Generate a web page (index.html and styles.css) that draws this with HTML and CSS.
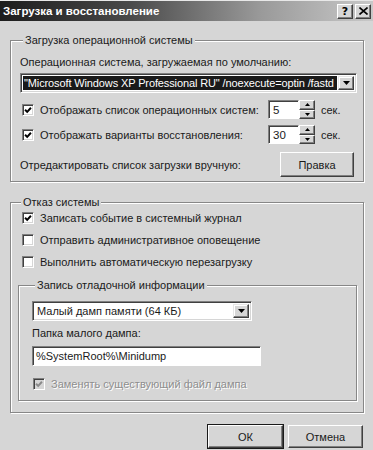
FILE: index.html
```html
<!DOCTYPE html>
<html lang="ru">
<head>
<meta charset="utf-8">
<title>Загрузка и восстановление</title>
<link rel="stylesheet" href="styles.css">
</head>
<body>
<div class="window">
  <div class="titlebar">
    <span class="title">Загрузка и восстановление</span>
    <div class="tb-buttons">
      <span class="tb-btn tb-help">?</span>
      <span class="tb-btn"><svg width="9" height="8" viewBox="0 0 9 8"><path d="M0.5 0.5 L8.5 7.5 M8.5 0.5 L0.5 7.5" stroke="#000" stroke-width="1.6" fill="none"/></svg></span>
    </div>
  </div>
  <div class="client">
    <fieldset class="group g-boot">
      <legend>Загрузка операционной системы</legend>
      <div class="label">Операционная система, загружаемая по умолчанию:</div>
      <div class="combo combo-os">
        <div class="combo-field"><span class="combo-sel">"Microsoft Windows XP Professional RU" /noexecute=optin /fastd</span></div>
        <span class="combo-btn"><svg width="7" height="4" viewBox="0 0 7 4"><path d="M0 0 H7 L3.5 4 Z" fill="#000"/></svg></span>
      </div>
      <div class="row row-spin">
        <span class="cb"><svg width="8" height="8" viewBox="0 0 9 9"><path d="M1.2 4.2 L3.6 6.6 L7.8 2" stroke="#000" stroke-width="2.2" fill="none"/></svg></span>
        <span class="row-label">Отображать список операционных систем:</span>
        <div class="spin">
          <span class="spin-field">5</span>
          <span class="spin-btns">
            <span class="spin-b"><svg width="5" height="3" viewBox="0 0 5 3"><path d="M0 3 H5 L2.5 0 Z" fill="#000"/></svg></span>
            <span class="spin-b"><svg width="5" height="3" viewBox="0 0 5 3"><path d="M0 0 H5 L2.5 3 Z" fill="#000"/></svg></span>
          </span>
        </div>
        <span class="unit">сек.</span>
      </div>
      <div class="row row-spin">
        <span class="cb"><svg width="8" height="8" viewBox="0 0 9 9"><path d="M1.2 4.2 L3.6 6.6 L7.8 2" stroke="#000" stroke-width="2.2" fill="none"/></svg></span>
        <span class="row-label">Отображать варианты восстановления:</span>
        <div class="spin">
          <span class="spin-field">30</span>
          <span class="spin-btns">
            <span class="spin-b"><svg width="5" height="3" viewBox="0 0 5 3"><path d="M0 3 H5 L2.5 0 Z" fill="#000"/></svg></span>
            <span class="spin-b"><svg width="5" height="3" viewBox="0 0 5 3"><path d="M0 0 H5 L2.5 3 Z" fill="#000"/></svg></span>
          </span>
        </div>
        <span class="unit">сек.</span>
      </div>
      <div class="row row-edit">
        <span class="row-label">Отредактировать список загрузки вручную:</span>
        <span class="btn btn-edit">Правка</span>
      </div>
    </fieldset>

    <fieldset class="group g-fail">
      <legend>Отказ системы</legend>
      <div class="row row-check first">
        <span class="cb"><svg width="8" height="8" viewBox="0 0 9 9"><path d="M1.2 4.2 L3.6 6.6 L7.8 2" stroke="#000" stroke-width="2.2" fill="none"/></svg></span>
        <span class="row-label">Записать событие в системный журнал</span>
      </div>
      <div class="row row-check">
        <span class="cb"></span>
        <span class="row-label">Отправить административное оповещение</span>
      </div>
      <div class="row row-check">
        <span class="cb"></span>
        <span class="row-label">Выполнить автоматическую перезагрузку</span>
      </div>

      <fieldset class="group g-debug">
        <legend>Запись отладочной информации</legend>
        <div class="combo combo-dump">
          <div class="combo-field plain"><span>Малый дамп памяти (64 КБ)</span></div>
          <span class="combo-btn"><svg width="7" height="4" viewBox="0 0 7 4"><path d="M0 0 H7 L3.5 4 Z" fill="#000"/></svg></span>
        </div>
        <div class="label label-dir">Папка малого дампа:</div>
        <div class="textbox">%SystemRoot%\Minidump</div>
        <div class="row row-check disabled">
          <span class="cb cb-disabled"><svg width="8" height="8" viewBox="0 0 9 9"><path d="M1.2 4.2 L3.6 6.6 L7.8 2" stroke="#8a8a8a" stroke-width="2.2" fill="none"/></svg></span>
          <span class="row-label">Заменять существующий файл дампа</span>
        </div>
      </fieldset>
    </fieldset>

    <div class="actions">
      <span class="btn btn-default">ОК</span>
      <span class="btn btn-cancel">Отмена</span>
    </div>
  </div>
</div>
</body>
</html>
```

FILE: styles.css
```css
html, body {
  margin: 0;
  padding: 0;
}

body {
  width: 373px;
  height: 450px;
  overflow: hidden;
  background: #d6d6d6;
  font-family: "Liberation Sans", Arial, sans-serif;
  font-size: 11px;
  color: #1a1a1a;
}

.window {
  width: 373px;
  height: 450px;
  display: flex;
  flex-direction: column;
}

.titlebar {
  height: 21px;
  display: flex;
  align-items: center;
  justify-content: space-between;
  padding: 0 2px 0 3px;
  background: linear-gradient(to right, #1c1c1c 0%, #4a4a4a 35%, #9a9a9a 70%, #c8c8c8 100%);
  border-top: 1px solid #e8e8e8;
  box-sizing: border-box;
}

.title {
  color: #fff;
  font-weight: bold;
  font-size: 11.5px;
}

.tb-buttons {
  display: flex;
  gap: 2px;
}

.tb-btn {
  width: 14px;
  height: 13px;
  background: #d6d6d6;
  border: 1px solid;
  border-color: #fff #404040 #404040 #fff;
  box-shadow: inset -1px -1px 0 #808080;
  display: flex;
  align-items: center;
  justify-content: center;
  font-weight: bold;
  font-size: 11px;
  line-height: 1;
  color: #000;
  font-family: "DejaVu Sans", sans-serif;
}

.client {
  flex: 1;
  display: flex;
  flex-direction: column;
  padding: 12px 9px 0 10px;
}

.group {
  margin: 0;
  border: 1px solid #878787;
  box-shadow: inset 1px 1px 0 #fff, 1px 1px 0 #fff;
  min-width: 0;
}

.group legend {
  padding: 0 2px;
  margin-left: 3px;
  background: #d6d6d6;
  line-height: 14px;
}

.g-boot {
  padding: 8px 6px 4px 9px;
}

.label {
  line-height: 14px;
}

.combo {
  display: flex;
  background: #fff;
  border: 1px solid;
  border-color: #808080 #fff #fff #808080;
  box-shadow: inset 1px 1px 0 #404040, inset -1px -1px 0 #d6d6d6;
  padding: 2px;
  height: 20px;
  box-sizing: border-box;
}

.combo-os {
  margin-top: 4px;
}

.combo-field {
  flex: 1;
  min-width: 0;
  overflow: hidden;
  white-space: nowrap;
  display: flex;
  align-items: center;
}

.combo-sel {
  display: block;
  background: #1a1a1a;
  color: #fff;
  width: 100%;
  line-height: 14px;
  padding-left: 1px;
  overflow: hidden;
  margin-right: 1px;
  letter-spacing: -0.12px;
}

.combo-field.plain span {
  padding-left: 2px;
}

.combo-btn {
  width: 16px;
  flex: none;
  background: #d6d6d6;
  border: 1px solid;
  border-color: #e6e6e6 #404040 #404040 #e6e6e6;
  box-shadow: inset -1px -1px 0 #808080, inset 1px 1px 0 #fff;
  box-sizing: border-box;
  display: flex;
  align-items: center;
  justify-content: center;
}

.row {
  display: flex;
  align-items: center;
}

.row-spin {
  height: 19px;
  margin-top: 7px;
  padding-left: 2px;
}

.row-spin + .row-spin {
  margin-top: 6px;
}

.cb {
  width: 12px;
  height: 12px;
  flex: none;
  box-sizing: border-box;
  background: #fff;
  border: 1px solid;
  border-color: #808080 #fff #fff #808080;
  box-shadow: inset 1px 1px 0 #404040, inset -1px -1px 0 #d6d6d6;
  display: flex;
  align-items: center;
  justify-content: center;
  margin-right: 6px;
}

.cb-disabled {
  background: #d6d6d6;
}

.row-label {
  white-space: nowrap;
}

.spin {
  margin-left: auto;
  display: flex;
  height: 19px;
}

.spin-field {
  width: 31px;
  box-sizing: border-box;
  background: #fff;
  border: 1px solid;
  border-color: #808080 #fff #fff #808080;
  box-shadow: inset 1px 1px 0 #404040;
  padding: 1px 0 0 4px;
  line-height: 16px;
  font-size: 11.5px;
}

.spin-btns {
  display: flex;
  flex-direction: column;
  width: 16px;
}

.spin-b {
  flex: 1;
  box-sizing: border-box;
  background: #d6d6d6;
  border: 1px solid;
  border-color: #fff #404040 #404040 #fff;
  box-shadow: inset -1px -1px 0 #808080;
  display: flex;
  align-items: center;
  justify-content: center;
}

.unit {
  width: 42px;
  padding-left: 6px;
  box-sizing: border-box;
}

.row-edit {
  margin-top: 8px;
  justify-content: space-between;
}

.btn {
  display: flex;
  align-items: center;
  justify-content: center;
  box-sizing: border-box;
  background: #d6d6d6;
  border: 1px solid;
  border-color: #fff #404040 #404040 #fff;
  box-shadow: inset -1px -1px 0 #808080;
}

.btn-edit {
  width: 74px;
  height: 25px;
  margin-right: 3px;
}

.g-fail {
  margin-top: 13px;
  padding: 0 6px 11px 7px;
}

.row-check {
  height: 22px;
  padding-left: 4px;
}

.row-check.first {
  margin-top: -2px;
}

.g-debug {
  margin-top: 5px;
  padding: 9px 6px 5px 13px;
}

.combo-dump {
  width: 220px;
  height: 20px;
}

.label-dir {
  margin-top: 5px;
}

.textbox {
  margin-top: 6px;
  width: 229px;
  height: 20px;
  box-sizing: border-box;
  background: #fff;
  border: 1px solid;
  border-color: #808080 #fff #fff #808080;
  box-shadow: inset 1px 1px 0 #404040;
  padding: 2px 0 0 3px;
  line-height: 15px;
}

.g-debug .row-check {
  margin-top: 7px;
  padding-left: 1px;
}

.disabled .row-label {
  color: #8e8e8e;
  text-shadow: 1px 1px 0 #fff;
}

.actions {
  display: flex;
  justify-content: flex-end;
  gap: 5px;
  margin-top: 12px;
  padding-right: 1px;
}

.actions .btn {
  width: 75px;
  height: 23px;
}

.btn-default {
  outline: 1px solid #1a1a1a;
  outline-offset: 0;
}
```
